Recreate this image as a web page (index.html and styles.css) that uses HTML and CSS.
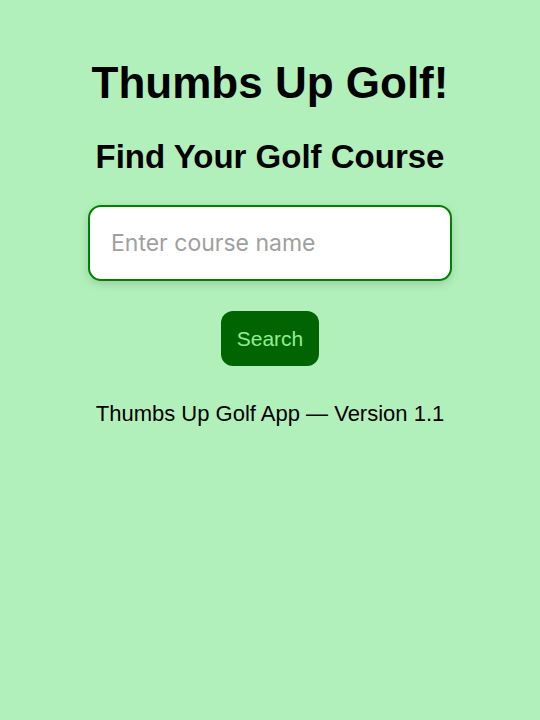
FILE: index.html
```html
<!DOCTYPE html>
<html lang="en">
<head>
<meta charset="utf-8">
<title>Thumbs Up Golf!</title>
<link rel="stylesheet" href="styles.css">
</head>
<body>
  <main class="page">
    <h1 class="title">Thumbs Up Golf!</h1>
    <h2 class="subtitle">Find Your Golf Course</h2>
    <input class="search-input" type="text" placeholder="Enter course name">
    <button class="search-btn" type="button">Search</button>
    <p class="footer">Thumbs Up Golf App — Version 1.1</p>
  </main>
</body>
</html>
```
FILE: styles.css
```css
html, body {
  margin: 0;
  padding: 0;
  background: #b2f0bb;
  font-family: "Liberation Sans", Arial, sans-serif;
  color: #000;
}
.page {
  display: flex;
  flex-direction: column;
  align-items: center;
  padding-top: 58px;
}
.title {
  margin: 0;
  font-size: 44px;
  font-weight: bold;
  line-height: 50px;
}
.subtitle {
  margin: 30px 0 0;
  font-size: 33px;
  font-weight: bold;
  line-height: 38px;
}
.search-input {
  box-sizing: border-box;
  margin-top: 29px;
  width: 364px;
  height: 76px;
  border: 2.5px solid #008000;
  border-radius: 13px;
  background: #fff;
  padding: 0 21px;
  font-family: Inter, "Liberation Sans", sans-serif;
  font-size: 23px;
  color: #000;
  box-shadow: 0 3px 10px rgba(0, 0, 0, 0.15);
  outline: none;
}
.search-input::placeholder {
  color: #a0a0a0;
}
.search-btn {
  margin-top: 30px;
  box-sizing: border-box;
  width: 98px;
  height: 55px;
  border: none;
  border-radius: 12px;
  background: #006400;
  color: #90ee90;
  font-family: "Liberation Sans", Arial, sans-serif;
  font-size: 21px;
  padding: 0;
}
.footer {
  margin: 35px 0 0;
  font-size: 22px;
  line-height: 25px;
}
```
